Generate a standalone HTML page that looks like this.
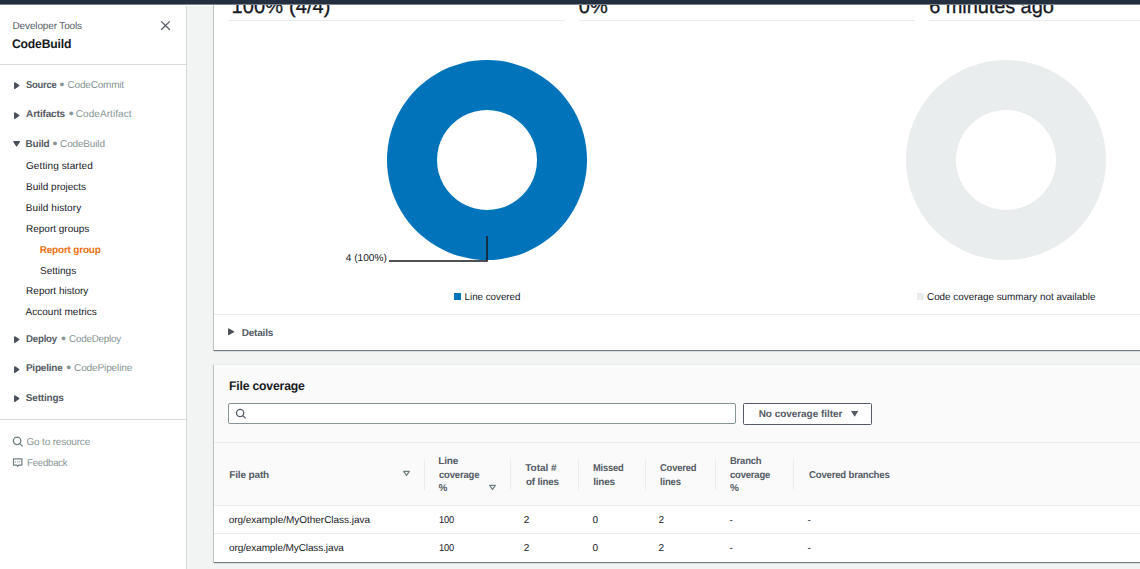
<!DOCTYPE html>
<html lang="en">
<head>
<meta charset="utf-8">
<title>CodeBuild - Report group</title>
<style>
*{box-sizing:border-box;margin:0;padding:0}
html,body{width:1140px;height:569px;overflow:hidden;background:#f2f3f3;font-family:"Liberation Sans",sans-serif;color:#16191f;text-rendering:geometricPrecision}
body{position:relative}
.topbar{position:absolute;left:0;top:0;width:1140px;height:5px;background:#232f3e;border-bottom:1px solid #7b828c;z-index:10}
.toprow{position:absolute;left:0;top:5px;width:213px;height:1px;background:#fff;z-index:9}
.t{position:absolute;white-space:nowrap;line-height:20px;transform-origin:0 0}
svg{position:absolute;overflow:visible}
.side{position:absolute;left:0;top:0;width:187px;height:569px;background:#fff;border-right:1px solid #d5dbdb}
.hr{position:absolute;left:0;width:186px;height:1px;background:#d5dbdb}
.sub{color:#545b64}
.title{color:#16191f}
.sec{color:#545b64}
.svc{color:#879596}
.dot{color:#879596;font-size:14px}
.it{color:#16191f}
.act{color:#ec7211}
.lnk{color:#879596}
.main{position:absolute;left:214px;top:0;width:940px;height:350px;background:#fff;box-shadow:0 1px 1px 0 rgba(0,28,36,.45),-1px 1px 1px 0 rgba(0,28,36,.15)}
.card{position:absolute;left:214px;top:364px;width:940px;height:198px;background:#fff;border-top:1px solid #eaeded;box-shadow:0 1px 1px 0 rgba(0,28,36,.45),-1px 1px 1px 0 rgba(0,28,36,.15)}
.big{color:#16191f;-webkit-text-stroke:0.3px #16191f}
.uline{position:absolute;height:1px;background:#eaeded}
.band{position:absolute;left:214px;width:940px;background:#fafafa}
.th{color:#545b64}
.td{color:#16191f}
.sep{position:absolute;width:1px;background:#eaeded;top:459px;height:31px}
.rowline{position:absolute;left:214px;width:940px;height:1px;background:#eaeded}
</style>
</head>
<body>
<div class="topbar"></div><div class="toprow"></div>

<nav class="side">
  <div class="t sub" style="left:12.5px;top:17px;font-size:10px;letter-spacing:-0.136px">Developer Tools</div>
  <div class="t title" style="left:12.2px;top:34px;font-size:12.5px;font-weight:bold;letter-spacing:-0.2px;transform:scaleX(0.9754)">CodeBuild</div>
  <svg style="left:160px;top:20px" width="11" height="11" viewBox="0 0 11 11"><path d="M1.2 1.4L9.8 9.7M9.8 1.4L1.2 9.7" stroke="#545b64" stroke-width="1.3" fill="none"/></svg>
  <div class="hr" style="top:64px"></div>

  <svg style="left:13.7px;top:82px" width="6" height="7" viewBox="0 0 6 7"><path d="M0.7 0.8L4.9 3.6L0.7 6.4Z" fill="#4a505a" stroke="#4a505a" stroke-width="1.2" stroke-linejoin="round"/></svg>
  <div class="t sec" style="left:25.8px;top:76px;font-size:10px;font-weight:bold;letter-spacing:-0.2px;transform:scaleX(0.9364)">Source</div><div class="t dot" style="left:59.5px;top:74px">•</div><div class="t svc" style="left:67.6px;top:76px;font-size:10px;letter-spacing:-0.2px">CodeCommit</div>
  <svg style="left:13.7px;top:111.5px" width="6" height="7" viewBox="0 0 6 7"><path d="M0.7 0.8L4.9 3.6L0.7 6.4Z" fill="#4a505a" stroke="#4a505a" stroke-width="1.2" stroke-linejoin="round"/></svg>
  <div class="t sec" style="left:26.1px;top:105px;font-size:10px;font-weight:bold;letter-spacing:-0.188px">Artifacts</div><div class="t dot" style="left:68.7px;top:103px">•</div><div class="t svc" style="left:75.8px;top:105px;font-size:10px;letter-spacing:0.064px">CodeArtifact</div>
  <svg style="left:13.3px;top:141.3px" width="7" height="6" viewBox="0 0 7 6"><path d="M0.8 0.7L6.4 0.7L3.6 4.9Z" fill="#4a505a" stroke="#4a505a" stroke-width="1.2" stroke-linejoin="round"/></svg>
  <div class="t sec" style="left:25.5px;top:135px;font-size:10px;font-weight:bold;letter-spacing:-0.2px">Build</div><div class="t dot" style="left:52.5px;top:133px">•</div><div class="t svc" style="left:60.1px;top:135px;font-size:10px;letter-spacing:-0.162px">CodeBuild</div>

  <div class="t it" style="left:26px;top:157px;font-size:10px;letter-spacing:0.086px">Getting started</div>
  <div class="t it" style="left:26.1px;top:178px;font-size:10px">Build projects</div>
  <div class="t it" style="left:25.8px;top:199px;font-size:10px;letter-spacing:0.075px">Build history</div>
  <div class="t it" style="left:26px;top:220px;font-size:10px">Report groups</div>
  <div class="t act" style="left:39.7px;top:241px;font-size:10px;font-weight:bold;letter-spacing:-0.2px">Report group</div>
  <div class="t it" style="left:40px;top:262px;font-size:10px">Settings</div>
  <div class="t it" style="left:26.1px;top:282px;font-size:10px">Report history</div>
  <div class="t it" style="left:25.6px;top:303px;font-size:10px">Account metrics</div>

  <svg style="left:13.7px;top:335.8px" width="6" height="7" viewBox="0 0 6 7"><path d="M0.7 0.8L4.9 3.6L0.7 6.4Z" fill="#4a505a" stroke="#4a505a" stroke-width="1.2" stroke-linejoin="round"/></svg>
  <div class="t sec" style="left:26.3px;top:330px;font-size:10px;font-weight:bold;letter-spacing:-0.2px;transform:scaleX(0.9636)">Deploy</div><div class="t dot" style="left:61px;top:328px">•</div><div class="t svc" style="left:69.2px;top:330px;font-size:10px;letter-spacing:-0.2px;transform:scaleX(0.9815)">CodeDeploy</div>
  <svg style="left:13.7px;top:365.5px" width="6" height="7" viewBox="0 0 6 7"><path d="M0.7 0.8L4.9 3.6L0.7 6.4Z" fill="#4a505a" stroke="#4a505a" stroke-width="1.2" stroke-linejoin="round"/></svg>
  <div class="t sec" style="left:25.9px;top:359px;font-size:10px;font-weight:bold;letter-spacing:-0.2px">Pipeline</div><div class="t dot" style="left:66.2px;top:357px">•</div><div class="t svc" style="left:73.8px;top:359px;font-size:10px;letter-spacing:-0.191px;transform:scaleX(1.0158)">CodePipeline</div>
  <svg style="left:13.7px;top:394.7px" width="6" height="7" viewBox="0 0 6 7"><path d="M0.7 0.8L4.9 3.6L0.7 6.4Z" fill="#4a505a" stroke="#4a505a" stroke-width="1.2" stroke-linejoin="round"/></svg>
  <div class="t sec" style="left:25.8px;top:389px;font-size:10px;font-weight:bold;letter-spacing:-0.2px">Settings</div>

  <div class="hr" style="top:419px"></div>
  <svg style="left:12px;top:436px" width="12" height="12" viewBox="0 0 12 12"><circle cx="5.1" cy="4.9" r="3.7" stroke="#6f7f80" stroke-width="1.3" fill="none"/><path d="M7.8 7.6L10.6 10.4" stroke="#6f7f80" stroke-width="1.3"/></svg>
  <div class="t lnk" style="left:26.5px;top:433px;font-size:10px;letter-spacing:-0.185px">Go to resource</div>
  <svg style="left:12px;top:457px" width="12" height="12" viewBox="0 0 12 12"><path d="M1.5 1.8H9.9V8.1H6.7L5.7 9.4L4.7 8.1H1.5Z" stroke="#6f7f80" stroke-width="1.2" fill="none" stroke-linejoin="round"/><path d="M3.1 5h1M5.2 5h1M7.2 5h1" stroke="#6f7f80" stroke-width="1.2"/></svg>
  <div class="t lnk" style="left:26.7px;top:454px;font-size:10px;letter-spacing:-0.2px;transform:scaleX(0.9558)">Feedback</div>
</nav>

<section class="main"></section>
<div class="t big" style="left:231.6px;top:-3px;font-size:20px;letter-spacing:0.122px">100% (4/4)</div>
<div class="uline" style="left:228px;top:20px;width:337px"></div>
<div class="t big" style="left:578.8px;top:-3px;font-size:20px">0%</div>
<div class="uline" style="left:579px;top:20px;width:336px"></div>
<div class="t big" style="left:929.2px;top:-3px;font-size:20px;letter-spacing:-0.083px">6 minutes ago</div>
<div class="uline" style="left:929px;top:20px;width:337px"></div>

<svg style="left:214px;top:40px" width="926" height="270" viewBox="214 40 926 270">
  <path d="M487 60A100 100 0 1 1 486.99 60ZM487 110A50 50 0 1 0 487.01 110Z" fill="#0073bb" fill-rule="evenodd"/>
  <path d="M487 236V261H389" stroke="#16191f" stroke-width="1.5" fill="none"/>
  <text x="345.7" y="260.7" font-family="Liberation Sans, sans-serif" font-size="10" textLength="41.2" lengthAdjust="spacingAndGlyphs" fill="#16191f">4 (100%)</text>
  <rect x="454" y="293" width="7" height="7" fill="#0073bb"/>
  <text x="464.6" y="299.8" font-family="Liberation Sans, sans-serif" font-size="10" textLength="55.8" lengthAdjust="spacingAndGlyphs" fill="#16191f">Line covered</text>
  <path d="M1006 60A100 100 0 1 1 1005.99 60ZM1006 110A50 50 0 1 0 1006.01 110Z" fill="#eaeded" fill-rule="evenodd"/>
  <rect x="917" y="293" width="7" height="7" fill="#eaeded"/>
  <text x="927" y="299.8" font-family="Liberation Sans, sans-serif" font-size="10" textLength="168.4" lengthAdjust="spacingAndGlyphs" fill="#16191f">Code coverage summary not available</text>
</svg>

<div class="uline" style="left:214px;top:314px;width:940px"></div>
<svg style="left:228px;top:328px" width="7" height="8" viewBox="0 0 7 8"><path d="M0.7 0.9L5.6 3.7L0.7 6.5Z" fill="#4a5058" stroke="#4a5058" stroke-width="1.2" stroke-linejoin="round"/></svg>
<div class="t th" style="left:241.7px;top:324px;font-size:10px;font-weight:bold;letter-spacing:-0.2px">Details</div>

<section class="card"></section>
<div class="band" style="top:365px;height:77px"></div>
<div class="rowline" style="top:442px"></div>
<div class="band" style="top:443px;height:62px"></div>
<div class="rowline" style="top:505px"></div>
<div class="rowline" style="top:533px"></div>

<div class="t title" style="left:228.8px;top:376px;font-size:12.5px;font-weight:bold;letter-spacing:-0.2px;transform:scaleX(0.9782)">File coverage</div>
<div style="position:absolute;left:228px;top:403px;width:508px;height:21px;background:#fff;border:1px solid #879596;border-radius:2px"></div>
<svg style="left:235px;top:408px" width="12" height="12" viewBox="0 0 12 12"><circle cx="5.1" cy="5" r="3.6" stroke="#545b64" stroke-width="1.3" fill="none"/><path d="M7.7 7.6L10.6 10.4" stroke="#545b64" stroke-width="1.3"/></svg>
<div style="position:absolute;left:743px;top:403px;width:129px;height:22px;background:#fff;border:1px solid #545b64;border-radius:1.5px"></div>
<div class="t th" style="left:758.7px;top:405px;font-size:10px;font-weight:bold;letter-spacing:-0.047px">No coverage filter</div>
<svg style="left:850.8px;top:411px" width="8" height="6" viewBox="0 0 8 6"><path d="M0 0H7.4L3.7 5.8Z" fill="#545b64"/></svg>

<div class="t th" style="left:229.2px;top:466px;font-size:10px;font-weight:bold;letter-spacing:-0.138px">File path</div>
<svg style="left:403px;top:471px" width="7" height="6" viewBox="0 0 7 6"><path d="M0.7 0.3H6.3L3.5 4.5Z" stroke="#6f7f80" stroke-width="1.3" stroke-linejoin="round" fill="none"/></svg>
<div class="sep" style="left:424px"></div>
<div class="t th" style="left:438.3px;top:452px;font-size:10px;font-weight:bold;letter-spacing:-0.2px">Line</div><div class="t th" style="left:438.6px;top:466px;font-size:10px;font-weight:bold;letter-spacing:-0.2px;transform:scaleX(0.9512)">coverage</div><div class="t th" style="left:438.5px;top:479px;font-size:10px;font-weight:bold">%</div>
<svg style="left:489px;top:485px" width="7" height="6" viewBox="0 0 7 6"><path d="M0.7 0.3H6.3L3.5 4.5Z" stroke="#6f7f80" stroke-width="1.3" stroke-linejoin="round" fill="none"/></svg>
<div class="sep" style="left:510px"></div>
<div class="t th" style="left:525.2px;top:459px;font-size:10px;font-weight:bold">Total #</div><div class="t th" style="left:525.6px;top:473px;font-size:10px;font-weight:bold;letter-spacing:-0.2px;transform:scaleX(0.9794)">of lines</div>
<div class="sep" style="left:578px"></div>
<div class="t th" style="left:593.3px;top:459px;font-size:10px;font-weight:bold;letter-spacing:-0.2px;transform:scaleX(0.9333)">Missed</div><div class="t th" style="left:593.2px;top:473px;font-size:10px;font-weight:bold;letter-spacing:-0.2px">lines</div>
<div class="sep" style="left:645px"></div>
<div class="t th" style="left:659.8px;top:459px;font-size:10px;font-weight:bold;letter-spacing:-0.2px;transform:scaleX(0.9385)">Covered</div><div class="t th" style="left:660px;top:473px;font-size:10px;font-weight:bold;letter-spacing:-0.2px;transform:scaleX(0.9545)">lines</div>
<div class="sep" style="left:715px"></div>
<div class="t th" style="left:730px;top:452px;font-size:10px;font-weight:bold;letter-spacing:-0.2px;transform:scaleX(0.9412)">Branch</div><div class="t th" style="left:729.9px;top:466px;font-size:10px;font-weight:bold;letter-spacing:-0.2px;transform:scaleX(0.9465)">coverage</div><div class="t th" style="left:729.9px;top:479px;font-size:10px;font-weight:bold">%</div>
<div class="sep" style="left:793px"></div>
<div class="t th" style="left:808.5px;top:466px;font-size:10px;font-weight:bold;letter-spacing:-0.2px;transform:scaleX(0.9583)">Covered branches</div>

<div class="t td" style="left:228.7px;top:511px;font-size:10px;letter-spacing:-0.036px">org/example/MyOtherClass.java</div>
<div class="t td" style="left:438.5px;top:511px;font-size:10px;letter-spacing:-0.2px;transform:scaleX(0.9294)">100</div>
<div class="t td" style="left:523.8px;top:511px;font-size:10px">2</div>
<div class="t td" style="left:592.5px;top:511px;font-size:10px">0</div>
<div class="t td" style="left:658.5px;top:511px;font-size:10px">2</div>
<div class="t td" style="left:729.4px;top:511px;font-size:10px">-</div>
<div class="t td" style="left:807.6px;top:511px;font-size:10px">-</div>

<div class="t td" style="left:229px;top:539px;font-size:10px;letter-spacing:-0.104px">org/example/MyClass.java</div>
<div class="t td" style="left:438.5px;top:539px;font-size:10px;letter-spacing:-0.2px;transform:scaleX(0.9294)">100</div>
<div class="t td" style="left:523.8px;top:539px;font-size:10px">2</div>
<div class="t td" style="left:592.5px;top:539px;font-size:10px">0</div>
<div class="t td" style="left:658.5px;top:539px;font-size:10px">2</div>
<div class="t td" style="left:729.4px;top:539px;font-size:10px">-</div>
<div class="t td" style="left:807.6px;top:539px;font-size:10px">-</div>
</body>
</html>
